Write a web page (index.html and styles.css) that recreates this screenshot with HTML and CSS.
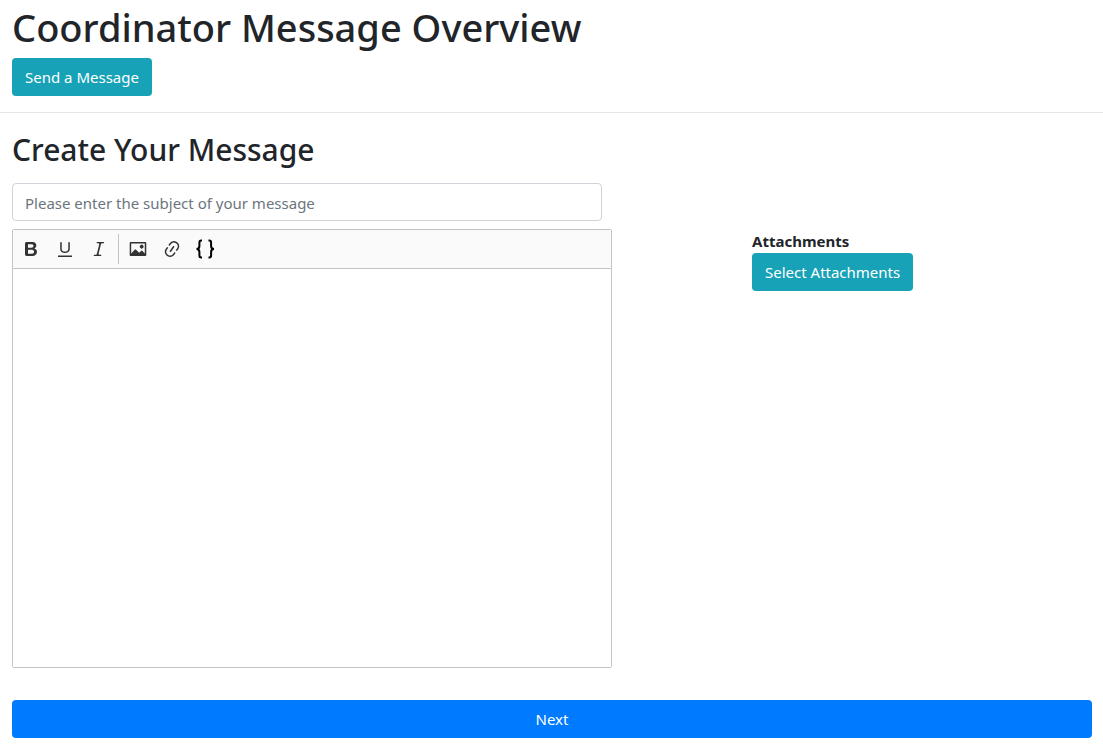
FILE: index.html
```html
<!DOCTYPE html>
<html lang="en">
<head>
<meta charset="utf-8">
<meta name="viewport" content="width=device-width, initial-scale=1">
<title>Coordinator Message Overview</title>
<link rel="stylesheet" href="styles.css">
</head>
<body>
<header class="page-header">
  <h1 class="page-title">Coordinator Message Overview</h1>
  <button type="button" class="btn btn-info">Send a Message</button>
</header>
<main class="composer">
  <h2 class="section-title">Create Your Message</h2>
  <input type="text" class="subject" aria-label="Subject" placeholder="Please enter the subject of your message">
  <div class="columns">
    <div class="editor">
      <div class="toolbar" role="toolbar" aria-label="Editor toolbar">
        <button type="button" class="tool" aria-label="Bold"><svg viewBox="0 0 20 20"><path d="M10.187 17H5.773c-.637 0-1.092-.138-1.364-.415-.273-.277-.409-.718-.409-1.323V4.738c0-.617.14-1.062.419-1.332.279-.27.73-.406 1.354-.406h4.68c.69 0 1.288.041 1.793.124.506.083.96.242 1.36.478.341.197.644.447.906.75a3.262 3.262 0 0 1 .808 2.162c0 1.401-.722 2.426-2.167 3.075C15.05 10.175 16 11.315 16 13.01a3.756 3.756 0 0 1-2.296 3.504 6.1 6.1 0 0 1-1.517.377c-.571.073-1.238.11-2 .11zm-.217-6.217H7v4.087h3.069c1.977 0 2.965-.69 2.965-2.072 0-.707-.256-1.22-.768-1.537-.512-.319-1.277-.478-2.296-.478zM7 5.13v3.619h2.606c.729 0 1.292-.067 1.69-.2a1.6 1.6 0 0 0 .91-.765c.165-.267.247-.566.247-.897 0-.707-.26-1.176-.778-1.409-.519-.232-1.31-.348-2.375-.348H7z"/></svg></button>
        <button type="button" class="tool" aria-label="Underline"><svg viewBox="0 0 20 20"><path d="M3 18v-1.5h14V18zM5.2 10V3.6c0-.4.4-.6.8-.6.3 0 .7.2.7.6v6.2c0 2 1.3 2.8 3.2 2.8 1.9 0 3.4-.9 3.4-2.9V3.6c0-.3.4-.5.8-.5.3 0 .7.2.7.5V10c0 2.7-2.2 4-4.9 4-2.6 0-4.7-1.2-4.7-4z"/></svg></button>
        <button type="button" class="tool" aria-label="Italic"><svg viewBox="0 0 20 20"><path d="m9.586 14.633.021.004c-.036.335.095.655.393.962.082.083.173.15.274.201h1.474a.6.6 0 1 1 0 1.2H5.304a.6.6 0 0 1 0-1.2h1.15c.474-.07.809-.182 1.005-.334.157-.122.291-.32.404-.597l2.416-9.55a1.053 1.053 0 0 0-.281-.823 1.12 1.12 0 0 0-.442-.296H8.15a.6.6 0 0 1 0-1.2h6.443a.6.6 0 1 1 0 1.2h-1.195c-.376.056-.65.155-.823.296-.215.175-.423.439-.623.79l-2.366 9.347z"/></svg></button>
        <span class="separator" role="separator"></span>
        <button type="button" class="tool" aria-label="Insert image"><svg viewBox="0 0 20 20"><path d="M6.91 10.54c.26-.23.64-.21.88.03l3.36 3.14 2.23-2.06a.64.64 0 0 1 .87 0l2.52 2.97V4.5H3.2v10.12l3.71-4.08zm10.27-7.51c.6 0 1.09.47 1.09 1.05v11.84c0 .59-.49 1.06-1.09 1.06H2.79c-.6 0-1.09-.47-1.09-1.06V4.08c0-.58.49-1.05 1.1-1.05h14.38zm-5.22 5.56a1.96 1.96 0 1 1 3.4-1.96 1.96 1.96 0 0 1-3.4 1.96z"/></svg></button>
        <button type="button" class="tool" aria-label="Link"><svg viewBox="0 0 20 20"><path d="m11.077 15 .991-1.416a.75.75 0 1 1 1.229.86l-1.148 1.64a.748.748 0 0 1-.217.206 5.251 5.251 0 0 1-8.503-5.955.741.741 0 0 1 .12-.274l1.147-1.639a.75.75 0 1 1 1.228.86L4.933 10.7l.006.003a3.75 3.75 0 0 0 6.132 4.294l.006.004zm5.494-5.335a.748.748 0 0 1-.12.274l-1.147 1.639a.75.75 0 1 1-1.228-.86l.86-1.23a3.75 3.75 0 0 0-6.144-4.301l-.86 1.229a.75.75 0 0 1-1.229-.86l1.148-1.64a.748.748 0 0 1 .217-.206 5.251 5.251 0 0 1 8.503 5.955zm-4.563-2.532a.75.75 0 0 1 .184 1.045l-3.155 4.505a.75.75 0 1 1-1.229-.86l3.155-4.506a.75.75 0 0 1 1.045-.184z"/></svg></button>
        <button type="button" class="tool tool-braces" aria-label="Insert placeholder"><svg viewBox="0 0 20 20"><path d="M6 1.500H5.200Q3.400 1.500 3.400 3.700V7Q3.400 10 .5 10Q3.400 10 3.400 13V16.300Q3.400 18.500 5.200 18.500H6M12.500 1.500H13.300Q15.100 1.500 15.100 3.700V7Q15.100 10 18 10Q15.100 10 15.100 13V16.300Q15.100 18.500 13.300 18.500H12.500"/></svg></button>
      </div>
      <textarea class="editor-body" aria-label="Message body"></textarea>
    </div>
    <section class="attachments">
      <h3 class="attachments-title">Attachments</h3>
      <button type="button" class="btn btn-info">Select Attachments</button>
    </section>
  </div>
  <button type="button" class="btn btn-primary">Next</button>
</main>
</body>
</html>
```

FILE: styles.css
```css
* { box-sizing: border-box; }

body {
  margin: 0;
  background: #fff;
  color: #212529;
  font-family: "Segoe UI", "Noto Sans", "Open Sans", sans-serif;
  font-size: 15px;
  line-height: 24px;
}

h1, h2, h3 { margin: 0; }

.page-header {
  padding: 3px 12px 16px;
  border-bottom: 1px solid #e5e5e5;
}

.page-title {
  margin-bottom: 7px;
  font-size: 38px;
  font-weight: 500;
  line-height: 48px;
}

.btn {
  height: 38px;
  padding: 0 12px;
  border: 1px solid transparent;
  border-radius: 4px;
  color: #fff;
  font: inherit;
  cursor: pointer;
}

.btn-info {
  display: block;
  background: #17a2b8;
}

.btn-primary {
  width: 100%;
  background: #007bff;
}

.composer {
  display: flex;
  flex-direction: column;
  padding: 18px 11px 11px 12px;
}

.section-title {
  margin-bottom: 14px;
  font-size: 30px;
  font-weight: 500;
  line-height: 38px;
}

.subject {
  width: 100%;
  max-width: 590px;
  height: 38px;
  margin-bottom: 8px;
  padding: 2px 12px 0;
  border: 1px solid #ced4da;
  border-radius: 4px;
  color: #495057;
  font: inherit;
}

.subject::placeholder {
  color: #6c757d;
  opacity: 1;
}

.columns {
  display: grid;
  grid-template-columns: minmax(0, 37fr) minmax(0, 17fr);
  margin-bottom: 32px;
}

.editor {
  width: 100%;
  max-width: 600px;
  border: 1px solid #c4c4c4;
  border-radius: 2px;
}

.toolbar {
  display: flex;
  align-items: center;
  gap: 4px;
  height: 39px;
  padding: 0 3px;
  border-bottom: 1px solid #c4c4c4;
  background: #fafafa;
}

.tool {
  display: flex;
  align-items: center;
  justify-content: center;
  width: 30px;
  height: 30px;
  padding: 0;
  border: 0;
  border-radius: 2px;
  background: transparent;
}

.tool svg {
  width: 20px;
  height: 20px;
  fill: #333;
}

.tool-braces svg {
  fill: none;
  stroke: #000;
  stroke-width: 2;
}

.separator {
  width: 1px;
  height: 30px;
  background: #c4c4c4;
}

.editor-body {
  display: block;
  width: 100%;
  height: 398px;
  padding: 12px;
  border: 0;
  color: inherit;
  font: inherit;
  resize: none;
}

.attachments-title {
  font-size: 15px;
  font-weight: 700;
  line-height: 24px;
}
```
